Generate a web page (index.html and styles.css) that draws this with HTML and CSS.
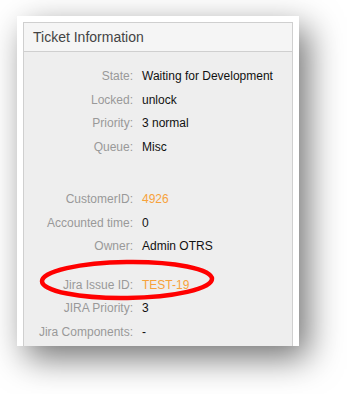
FILE: index.html
```html
<!DOCTYPE html>
<html lang="en">
<head>
    <meta charset="UTF-8">
    <title>Ticket Information</title>
    <link rel="stylesheet" href="styles.css">
</head>
<body>
    <div class="card">
        <div class="widget">
            <div class="header">
                <h2>Ticket Information</h2>
            </div>
            <div class="content">
                <div class="row"><span class="label">State:</span><span class="value">Waiting for Development</span></div>
                <div class="row"><span class="label">Locked:</span><span class="value">unlock</span></div>
                <div class="row"><span class="label">Priority:</span><span class="value">3 normal</span></div>
                <div class="row"><span class="label">Queue:</span><span class="value">Misc</span></div>
                <div class="spacer big"></div>
                <div class="row"><span class="label">CustomerID:</span><span class="value link">4926</span></div>
                <div class="row"><span class="label">Accounted time:</span><span class="value">0</span></div>
                <div class="row"><span class="label">Owner:</span><span class="value">Admin OTRS</span></div>
                <div class="spacer"></div>
                <div class="row"><span class="label">Jira Issue ID:</span><span class="value link">TEST-19</span></div>
                <div class="row"><span class="label">JIRA Priority:</span><span class="value">3</span></div>
                <div class="row"><span class="label">Jira Components:</span><span class="value">-</span></div>
            </div>
        </div>
        <!-- annotation drawn over the Jira row -->
        <svg class="mark" width="180" height="44" viewBox="0 0 180 44">
            <ellipse cx="89" cy="21" rx="85" ry="18" fill="none" stroke="#f00" stroke-width="4.5" transform="rotate(-0.8 89 21)"/>
        </svg>
    </div>
</body>
</html>
```

FILE: styles.css
```css
html {
    height: 100%;
}
body {
    margin: 0;
    min-height: 394px;
    background-color: #fff;
    font-family: "Liberation Sans", Arial, sans-serif;
}
.card {
    position: relative;
    width: 270px;
    height: 324px;
    margin: 16px 0 0 17px;
    padding: 6px 6px 0 6px;
    background-color: #fff;
    box-shadow: 9px 12px 32px rgba(0,0,0,0.55);
    overflow: hidden;
}
.widget {
    border: 1px solid #cfcfcf;
    border-bottom: none;
    height: 100%;
    background-color: #eee;
}
.header {
    height: 28px;
    background-color: #f5f5f5;
    border-bottom: 1px solid #cfcfcf;
    padding-left: 9px;
}
.header h2 {
    margin: 0;
    font-size: 14px;
    font-weight: normal;
    line-height: 28px;
    color: #444;
}
.content {
    padding-top: 13px;
}
.row {
    display: flex;
    height: 23.6px;
    line-height: 23.6px;
    font-size: 12px;
}
.label {
    width: 109px;
    text-align: right;
    color: #999;
    white-space: nowrap;
}
.value {
    margin-left: 9px;
    color: #111;
    white-space: nowrap;
}
.value.link {
    color: #f7a23b;
}
.spacer {
    height: 15px;
}
.spacer.big {
    height: 28.6px;
}
.mark {
    position: absolute;
    left: 21px;
    top: 243px;
}
```
